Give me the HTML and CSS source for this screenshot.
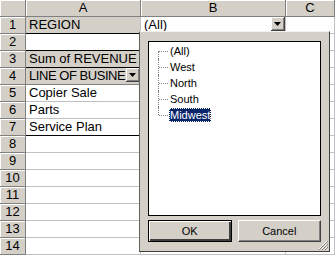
FILE: index.html
```html
<!DOCTYPE html>
<html lang="en">
<head>
    <meta charset="UTF-8">
    <title>PivotTable Page Field</title>
    <link rel="stylesheet" href="styles.css">
</head>
<body>
    <div class="sheet">
        <div class="hd corner"></div>
        <div class="hd">A</div>
        <div class="hd">B</div>
        <div class="hd">C</div>

        <div class="rh">1</div>
        <div class="cell field line-below">REGION</div>
        <div class="cell drop">
            <span class="txt">(All)</span>
            <span class="dd"><svg width="7" height="4" viewBox="0 0 7 4"><path d="M0 0h7L3.5 4z" fill="#000"/></svg></span>
        </div>
        <div class="cell"></div>

        <div class="rh">2</div>
        <div class="cell line-below"></div>
        <div class="cell"></div>
        <div class="cell"></div>

        <div class="rh">3</div>
        <div class="cell field line-below">Sum of REVENUE</div>
        <div class="cell"></div>
        <div class="cell"></div>

        <div class="rh">4</div>
        <div class="cell field drop mid-below">
            <span class="txt tight">LINE OF BUSINE</span>
            <span class="dd"><svg width="7" height="4" viewBox="0 0 7 4"><path d="M0 0h7L3.5 4z" fill="#000"/></svg></span>
        </div>
        <div class="cell"></div>
        <div class="cell"></div>

        <div class="rh">5</div>
        <div class="cell">Copier Sale</div>
        <div class="cell"></div>
        <div class="cell"></div>

        <div class="rh">6</div>
        <div class="cell">Parts</div>
        <div class="cell"></div>
        <div class="cell"></div>

        <div class="rh">7</div>
        <div class="cell line-below">Service Plan</div>
        <div class="cell"></div>
        <div class="cell"></div>

        <div class="rh">8</div><div class="cell"></div><div class="cell"></div><div class="cell"></div>
        <div class="rh">9</div><div class="cell"></div><div class="cell"></div><div class="cell"></div>
        <div class="rh">10</div><div class="cell"></div><div class="cell"></div><div class="cell"></div>
        <div class="rh">11</div><div class="cell"></div><div class="cell"></div><div class="cell"></div>
        <div class="rh">12</div><div class="cell"></div><div class="cell"></div><div class="cell"></div>
        <div class="rh">13</div><div class="cell"></div><div class="cell"></div><div class="cell"></div>
        <div class="rh">14</div><div class="cell"></div><div class="cell"></div><div class="cell"></div>
    </div>

    <!-- dropdown of the REGION page field -->
    <div class="popup">
        <ul class="tree">
            <li><span>(All)</span></li>
            <li><span>West</span></li>
            <li><span>North</span></li>
            <li><span>South</span></li>
            <li class="sel"><span>Midwest</span></li>
        </ul>
        <div class="buttons">
            <button class="btn default">OK</button>
            <button class="btn">Cancel</button>
        </div>
        <svg class="grip" width="10" height="10" viewBox="0 0 10 10">
            <path d="M9 1L1 9M9 4L4 9M9 7L7 9" stroke="#fff" stroke-width="1"/>
            <path d="M10 1L1 10M10 4L4 10M10 7L7 10" stroke="#808080" stroke-width="1"/>
        </svg>
    </div>
</body>
</html>
```

FILE: styles.css
```css
body {
    margin: 0;
    width: 335px;
    height: 256px;
    overflow: hidden;
    background: #fff;
    font-family: "Liberation Sans", Arial, sans-serif;
    position: relative;
}

.sheet {
    display: grid;
    grid-template-columns: 26px 115px 145px 49px;
    grid-auto-rows: 17px;
    font-size: 13px;
    line-height: 16px;
    color: #000;
}

.hd,
.rh {
    background: #d4d0c8;
    border-right: 1px solid #808080;
    border-bottom: 1px solid #808080;
    box-shadow: inset 1px 1px 0 #fff;
    text-align: center;
}

.cell {
    border-right: 1px solid #c0c0c0;
    border-bottom: 1px solid #c0c0c0;
    padding-left: 3px;
    white-space: nowrap;
    overflow: hidden;
}

.field {
    background: #d4d0c8;
}

.line-below {
    border-bottom-color: #000;
}

.mid-below {
    border-bottom-color: #808080;
}

.drop {
    display: flex;
    padding-right: 0;
}

.drop .txt {
    flex: 1;
    overflow: hidden;
}

.drop .tight {
    letter-spacing: -0.45px;
}

.dd {
    width: 14px;
    height: 14px;
    background: #d4d0c8;
    display: flex;
    align-items: center;
    justify-content: center;
    box-sizing: border-box;
    border-right: 1px solid #404040;
    border-bottom: 1px solid #404040;
    box-shadow: inset 1px 1px 0 #fff, inset -1px -1px 0 #808080;
}

.popup {
    position: absolute;
    left: 139px;
    top: 31px;
    width: 191px;
    height: 221px;
    box-sizing: border-box;
    background: #d4d0c8;
    border-top: 1px solid #f4f3f0;
    border-left: 1px solid #606060;
    border-right: 1px solid #404040;
    border-bottom: 1px solid #404040;
    padding: 9px 8px 0 8px;
    font-size: 11px;
}

.tree {
    list-style: none;
    margin: 0;
    padding: 1px 0 0 0;
    height: 175px;
    box-sizing: border-box;
    background: #fff;
    border: 1px solid #000;
}

.tree li {
    position: relative;
    height: 16px;
    line-height: 16px;
    padding-left: 20px;
}

.tree li::before {
    content: "";
    position: absolute;
    left: 9px;
    top: 0;
    height: 16px;
    border-left: 1px dotted #808080;
}

.tree li:first-child::before {
    top: 8px;
    height: 8px;
}

.tree li:last-child::before {
    height: 8px;
}

.tree li::after {
    content: "";
    position: absolute;
    left: 10px;
    top: 8px;
    width: 9px;
    border-top: 1px dotted #808080;
}

.tree li span {
    padding: 1px 1px;
}

.tree li.sel span {
    background: #0a246a;
    color: #fff;
    outline: 1px dotted #fff;
    outline-offset: -1px;
}

.buttons {
    display: flex;
    gap: 6px;
    margin-top: 4px;
}

.btn {
    flex: 1;
    height: 22px;
    background: #d4d0c8;
    font-family: "Liberation Sans", Arial, sans-serif;
    font-size: 11px;
    color: #000;
    border: 1px solid;
    border-color: #fff #404040 #404040 #fff;
    box-shadow: inset -1px -1px 0 #808080;
    padding: 0;
}

.btn.default {
    border: 1px solid #000;
    box-shadow: inset 1px 1px 0 #fff, inset -2px -2px 0 #404040;
}

.grip {
    position: absolute;
    right: 1px;
    bottom: 1px;
}
```
